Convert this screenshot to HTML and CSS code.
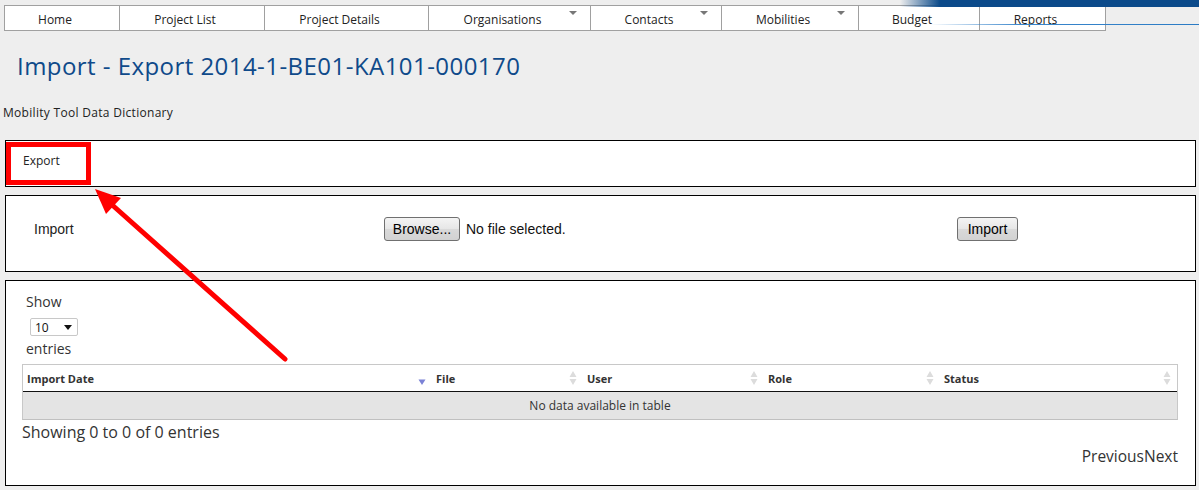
FILE: index.html
```html
<!DOCTYPE html>
<html>
<head>
<meta charset="utf-8">
<link rel="stylesheet" href="styles.css">
</head>
<body>
<div class="page">
  <header class="header">
    <nav class="nav">
      <a class="nav-item w-home">Home</a>
      <a class="nav-item w-plist">Project List</a>
      <a class="nav-item w-pdet">Project Details</a>
      <a class="nav-item w-org has-sub">Organisations</a>
      <a class="nav-item w-con has-sub">Contacts</a>
      <a class="nav-item w-mob has-sub">Mobilities</a>
      <a class="nav-item w-bud">Budget</a>
      <a class="nav-item w-rep">Reports</a>
    </nav>
  </header>

  <h1 class="title">Import - Export 2014-1-BE01-KA101-000170</h1>
  <div class="dict">Mobility Tool Data Dictionary</div>

  <section class="box export-box">
    <span class="export-link">Export</span>
    <div class="highlight"></div>
  </section>

  <section class="box import-box">
    <div class="import-label">Import</div>
    <div class="file-area">
      <button class="win-btn browse">Browse...</button>
      <span class="file-name">No file selected.</span>
    </div>
    <button class="win-btn import-btn">Import</button>
  </section>

  <section class="box table-box">
    <div class="length">
      <div class="lbl">Show</div>
      <div class="select"><span>10</span><svg width="8" height="5" viewBox="0 0 8 5"><path d="M0 0H8L4 5Z" fill="#111"/></svg></div>
      <div class="lbl lbl-entries">entries</div>
    </div>
    <div class="grid">
      <div class="th c1"><span>Import Date</span><svg class="sort" width="8" height="16" viewBox="0 0 8 16"><path d="M0.5 9.5H7.5L4 15Z" fill="#7b82d6"/></svg></div>
      <div class="th c2"><span>File</span><svg class="sort" width="8" height="16" viewBox="0 0 8 16"><path d="M4 1L7.5 7H0.5Z M0.5 9H7.5L4 15Z" fill="#dcdcdc"/></svg></div>
      <div class="th c3"><span>User</span><svg class="sort" width="8" height="16" viewBox="0 0 8 16"><path d="M4 1L7.5 7H0.5Z M0.5 9H7.5L4 15Z" fill="#dcdcdc"/></svg></div>
      <div class="th c4"><span>Role</span><svg class="sort" width="8" height="16" viewBox="0 0 8 16"><path d="M4 1L7.5 7H0.5Z M0.5 9H7.5L4 15Z" fill="#dcdcdc"/></svg></div>
      <div class="th c5"><span>Status</span><svg class="sort" width="8" height="16" viewBox="0 0 8 16"><path d="M4 1L7.5 7H0.5Z M0.5 9H7.5L4 15Z" fill="#dcdcdc"/></svg></div>
      <div class="empty">No data available in table</div>
    </div>
    <div class="info">Showing 0 to 0 of 0 entries</div>
    <div class="paging">PreviousNext</div>
  </section>

  <svg class="arrow" width="1199" height="490" viewBox="0 0 1199 490">
    <line x1="285" y1="359" x2="110" y2="203" stroke="#ff0000" stroke-width="5" stroke-linecap="round"/>
    <polygon points="95,189 106,214 121,198" fill="#ff0000"/>
  </svg>
</div>
</body>
</html>
```

FILE: styles.css
```css
* { box-sizing: border-box; }
html, body { margin: 0; padding: 0; }
body {
  background: #eeeeee;
  font-family: "Open Sans", "DejaVu Sans", sans-serif;
  color: #333;
  width: 1199px;
  height: 490px;
  overflow: hidden;
}
.page { position: relative; }

.header {
  position: relative;
  height: 31px;
  padding-top: 5px;
  padding-left: 4px;
}
.header::before {
  content: "";
  position: absolute;
  top: 0;
  left: 900px;
  width: 299px;
  height: 7px;
  background: linear-gradient(to right, rgba(11,74,138,0) 0, #0b4a8a 40px, #0b4a8a 100%);
  z-index: 2;
}
.header::after {
  content: "";
  position: absolute;
  top: 24px;
  left: 930px;
  width: 269px;
  height: 1px;
  background: linear-gradient(to right, rgba(40,120,200,0) 0, #3a86cc 90px, #2b7bc4 100%);
  z-index: 2;
}
.nav {
  display: flex;
  height: 26px;
  width: 1102px;
  border: 1px solid #a0a0a0;
  background: #fff;
  position: relative;
  z-index: 1;
}
.nav-item {
  position: relative;
  display: flex;
  align-items: center;
  justify-content: center;
  padding-right: 14px;
  font-size: 12px;
  color: #222;
  border-left: 1px solid #a0a0a0;
  white-space: nowrap;
  padding-top: 2px;
}
.nav-item:first-child { border-left: 0; }
.w-home { width: 114px; }
.w-plist { width: 145px; }
.w-pdet { width: 164px; }
.w-org { width: 162px; }
.w-con { width: 131px; }
.w-mob { width: 137px; }
.w-bud { width: 121px; }
.w-rep { width: 126px; }
.has-sub::after {
  content: "";
  position: absolute;
  right: 13px;
  top: 5px;
  border-left: 4px solid transparent;
  border-right: 4px solid transparent;
  border-top: 4px solid #777;
}

.title {
  margin: 20px 0 0 17px;
  font-size: 24px;
  line-height: 30px;
  font-weight: normal;
  color: #0f4a8a;
  letter-spacing: 0.45px;
}
.dict {
  margin: 24px 0 0 3px;
  font-size: 12px;
  line-height: 16px;
  color: #222;
  letter-spacing: 0.3px;
}

.box {
  margin-left: 5px;
  width: 1191px;
  background: #fff;
  border: 1px solid #000;
}
.export-box {
  position: relative;
  margin-top: 19px;
  height: 47px;
  padding: 7px 0 0 17px;
}
.export-link {
  font-size: 12px;
  line-height: 16px;
  color: #222;
}
.highlight {
  position: absolute;
  left: 0;
  top: 1px;
  width: 85px;
  height: 43px;
  border: 5px solid #ff0000;
}

.import-box {
  margin-top: 8px;
  height: 77px;
  display: flex;
  align-items: flex-start;
  padding: 21px 0 0 28px;
  font-family: "Liberation Sans", Arial, sans-serif;
  font-size: 14px;
  color: #222;
}
.import-label { width: 350px; line-height: 24px; }
.file-area { width: 573px; display: flex; align-items: center; gap: 6px; height: 24px; }
.file-name { color: #111; }
.win-btn {
  height: 24px;
  border: 1px solid #707070;
  border-radius: 3px;
  background: linear-gradient(#f4f4f4, #e6e6e6 50%, #d9d9d9 51%, #d2d2d2);
  font-family: "Liberation Sans", Arial, sans-serif;
  font-size: 14px;
  color: #000;
  padding: 0;
  margin: 0;
}
.browse { width: 76px; }
.import-btn { width: 61px; }

.table-box {
  margin-top: 8px;
  height: 206px;
  padding: 12px 17px 0 16px;
}
.length { padding-left: 4px; }
.lbl { font-size: 14px; line-height: 18px; color: #333; }
.lbl-entries { margin-top: 4px; }
.select {
  margin: 7px 0 0 4px;
  width: 48px;
  height: 18px;
  border: 1px solid #c8c8c8;
  border-radius: 2px;
  display: flex;
  align-items: center;
  justify-content: space-between;
  padding: 0 5px 0 4px;
  font-size: 12px;
  color: #111;
}
.grid {
  margin-top: 6px;
  display: grid;
  grid-template-columns: 409px 151px 181px 176px 237px;
  border: 1px solid #c8c8c8;
  border-bottom-color: #c0c0c0;
}
.th {
  height: 27px;
  display: flex;
  align-items: center;
  justify-content: space-between;
  padding: 0 6px 0 4px;
  font-size: 11px;
  font-weight: bold;
  color: #333;
  border-bottom: 1px solid #111;
}
.empty {
  grid-column: 1 / -1;
  height: 27px;
  background: #e4e4e4;
  font-size: 12px;
  line-height: 27px;
  text-align: center;
  color: #333;
}
.info {
  margin-top: 3px;
  font-size: 16px;
  line-height: 18px;
  color: #333;
}
.paging {
  margin-top: 6px;
  text-align: right;
  font-size: 15.5px;
  line-height: 18px;
  color: #333;
}

.arrow {
  position: absolute;
  left: 0;
  top: 0;
  pointer-events: none;
  z-index: 5;
}
```
